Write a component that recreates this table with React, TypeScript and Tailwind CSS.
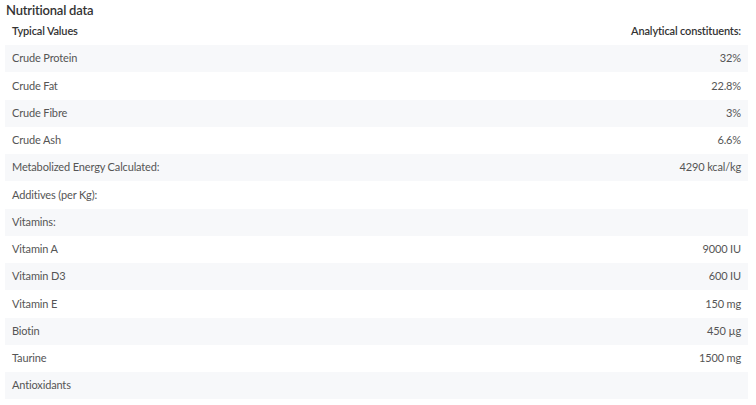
const rows: [string, string][] = [
  ["Crude Protein", "32%"],
  ["Crude Fat", "22.8%"],
  ["Crude Fibre", "3%"],
  ["Crude Ash", "6.6%"],
  ["Metabolized Energy Calculated:", "4290 kcal/kg"],
  ["Additives (per Kg):", ""],
  ["Vitamins:", ""],
  ["Vitamin A", "9000 IU"],
  ["Vitamin D3", "600 IU"],
  ["Vitamin E", "150 mg"],
  ["Biotin", "450 µg"],
  ["Taurine", "1500 mg"],
  ["Antioxidants", ""],
];

export default function App() {
  return (
    <div className="w-[756px] h-[405px] bg-white font-['Lato',sans-serif] text-[#555]">
      <h2 className="h-[18px] pl-[6px] text-[13px] leading-[21px] tracking-[-0.2px] font-semibold text-[#333]">Nutritional data</h2>
      <table className="ml-[5px] w-[743px] border-collapse text-[11px] tracking-[-0.15px]">
        <thead>
          <tr className="h-[27px]">
            <th className="pl-[7px] text-left font-semibold text-[#333]">Typical Values</th>
            <th className="pr-[7px] text-right font-semibold text-[#333]">Analytical constituents:</th>
          </tr>
        </thead>
        <tbody>
          {rows.map(([k, v], i) => (
            <tr key={k} className={i % 2 === 0 ? "h-[27.25px] bg-[#f7f8fa]" : "h-[27.25px]"}>
              <td className="pl-[7px]">{k}</td>
              <td className="pr-[7px] text-right">{v}</td>
            </tr>
          ))}
        </tbody>
      </table>
    </div>
  );
}
